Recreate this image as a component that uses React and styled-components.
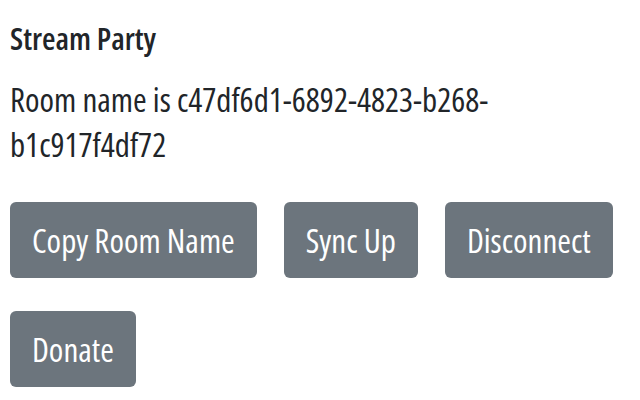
import React from "react";
import styled, { createGlobalStyle } from "styled-components";

const GlobalStyle = createGlobalStyle`
  body {
    margin: 0;
    background: #fff;
    color: #212529;
    font-family: "Open Sans", "Noto Sans", sans-serif;
  }
`;

const Popup = styled.div`
  padding: 20px 10px 0;
`;

const Title = styled.h5`
  margin: 0 0 21px;
  font-size: 31px;
  line-height: 36px;
  font-weight: 600;
  font-stretch: 75%;
`;

const RoomText = styled.p`
  margin: 0 0 35px;
  max-width: 560px;
  font-size: 33px;
  line-height: 45px;
  font-stretch: 75%;
`;

const Buttons = styled.div`
  display: flex;
  flex-wrap: wrap;
  column-gap: 27px;
  row-gap: 33px;
`;

const Button = styled.button`
  height: 76px;
  padding: 0 22px;
  border: none;
  border-radius: 6px;
  background: #6c757d;
  color: #fff;
  font-family: inherit;
  font-size: 33px;
  font-stretch: 75%;
  cursor: pointer;
`;

const roomName = "c47df6d1-6892-4823-b268-b1c917f4df72";

function App() {
  return (
    <Popup>
      <GlobalStyle />
      <Title>Stream Party</Title>
      <RoomText>{`Room name is ${roomName}`}</RoomText>
      <Buttons>
        <Button>Copy Room Name</Button>
        <Button>Sync Up</Button>
        <Button>Disconnect</Button>
        <Button>Donate</Button>
      </Buttons>
    </Popup>
  );
}

export default App;
